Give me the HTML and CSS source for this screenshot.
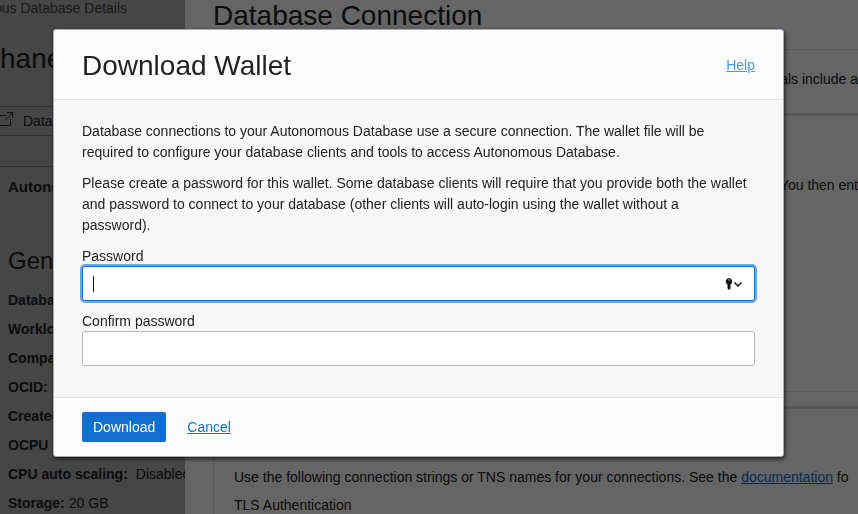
FILE: index.html
```html
<!DOCTYPE html>
<html lang="en">
<head>
<meta charset="utf-8">
<title>Download Wallet</title>
<link rel="stylesheet" href="styles.css">
</head>
<body>
<div class="page">
  <aside class="details">
    <p class="crumb">ous Database Details</p>
    <h2 class="db-name">hane</h2>
    <div class="toolbar">
      <svg width="14" height="16" viewBox="0 0 14 16" fill="none" stroke="currentColor" aria-hidden="true"><path d="M0 4.500H6M10.500 8V14.500H0M5 9.500L12.500 2M7 1.500H12.500V7"/></svg>
      <span>Data</span>
    </div>
    <div class="tab">Autono</div>
    <h3 class="section">General</h3>
    <dl class="facts">
      <div><dt>Database</dt></div>
      <div><dt>Workload</dt></div>
      <div><dt>Compartment</dt></div>
      <div><dt>OCID:</dt><dd>...</dd></div>
      <div><dt>Created</dt></div>
      <div><dt>OCPU</dt></div>
      <div><dt>CPU auto scaling:</dt><dd class="spaced">Disabled</dd></div>
      <div><dt>Storage:</dt><dd>20 GB</dd></div>
    </dl>
  </aside>
  <main class="connection">
    <h1 class="page-title">Database Connection</h1>
    <section class="panel intro"><p class="trail">ials include a</p></section>
    <section class="panel wallet"><p class="trail">You then ent</p></section>
    <section class="panel strings">
      <p>Use the following connection strings or TNS names for your connections. See the <a href="#">documentation</a> fo</p>
      <p>TLS Authentication</p>
    </section>
  </main>
</div>
<div class="overlay">
  <form class="dialog" role="dialog" aria-labelledby="dialog-title">
    <header class="dialog-head">
      <h2 id="dialog-title">Download Wallet</h2>
      <a class="help" href="#">Help</a>
    </header>
    <div class="dialog-body">
      <p>Database connections to your Autonomous Database use a secure connection. The wallet file will be required to configure your database clients and tools to access Autonomous Database.</p>
      <p>Please create a password for this wallet. Some database clients will require that you provide both the wallet and password to connect to your database (other clients will auto-login using the wallet without a<br>password).</p>
      <label for="password">Password</label>
      <div class="field active">
        <span class="caret"></span>
        <input id="password" type="password">
        <svg class="key" width="18" height="14" viewBox="0 0 18 14" aria-hidden="true"><path fill="#111" fill-rule="evenodd" d="M4 1a3.500 3.500 0 0 1 1.500 6.500V11.500L4 13L2.500 11.500V7.500A3.500 3.500 0 0 1 4 1ZM4 2.200a.7.7 0 1 0 0 1.400a.7.7 0 1 0 0-1.400Z"/><path fill="none" stroke="#111" stroke-width="1.500" d="M9.500 5.500L13 9L16.500 5.500"/></svg>
      </div>
      <label for="confirm">Confirm password</label>
      <div class="field"><input id="confirm" type="password"></div>
    </div>
    <footer class="dialog-foot">
      <button type="submit">Download</button>
      <a href="#">Cancel</a>
    </footer>
  </form>
</div>
</body>
</html>
```
FILE: styles.css
```css
* { box-sizing: border-box; }
html, body { height: 100%; }
body {
  margin: 0;
  overflow: hidden;
  font: 14px/21px "Liberation Sans", Arial, sans-serif;
  color: #222;
}
h1, h2, h3, p, dl, dd { margin: 0; font-weight: normal; }

.page {
  display: grid;
  grid-template-columns: 185px 1fr;
  height: 100%;
  overflow: hidden;
  background: #fcfcfc;
}
.details {
  min-width: 0;
  overflow: hidden;
  white-space: nowrap;
  background: #afafaf;
}
.crumb { height: 40px; margin-left: -6px; line-height: 17px; color: #444; }
.db-name { height: 66px; font-size: 28px; line-height: 38px; }
.toolbar {
  display: flex;
  align-items: center;
  gap: 9px;
  height: 30px;
  border: solid #777;
  border-width: 1px 0;
}
.toolbar svg { margin-bottom: 4px; }
.tab {
  margin-top: 30px;
  padding: 9px 8px 10px;
  border-top: 1px solid #777;
  font-size: 15px;
  font-weight: bold;
}
.section { padding: 38px 8px 0; font-size: 24px; line-height: 32px; }
.facts { padding: 9px 0 0 8px; }
.facts div { display: flex; gap: 4px; height: 29px; line-height: 29px; }
.facts dt { font-weight: bold; }
.facts .spaced { padding-left: 4px; }

.connection { min-width: 0; padding-left: 28px; overflow: hidden; white-space: nowrap; }
.page-title { height: 49px; font-size: 28px; line-height: 32px; }
.panel { border: solid #e2e2e2; border-width: 1px 0 0 1px; }
.trail { display: flex; justify-content: flex-end; }
.intro { height: 67px; padding-top: 19px; border-bottom: 3px solid #d9dadc; }
.wallet { height: 276px; padding-top: 59px; border-bottom-width: 1px; border-top: 0; }
.strings { margin-top: 14px; padding: 58px 0 0 20px; border-top: 3px solid #d3d7de; }
.strings p { margin-bottom: 7px; }

a { color: #116fd0; }

.overlay {
  position: fixed;
  inset: 0;
  padding: 29px 74px 0 53px;
  background: rgba(0, 0, 0, .6);
}
.dialog {
  border: 1px solid #a5acb8;
  border-radius: 3px;
  background: #fcfcfc;
  box-shadow: 1px 2px 4px rgba(0, 0, 0, .7);
}
.dialog-head {
  display: flex;
  align-items: center;
  justify-content: space-between;
  height: 70px;
  padding: 2px 28px 0;
  border-bottom: 1px solid #e2e2e2;
}
.dialog-head h2 { font-size: 28px; line-height: 36px; }
.help { color: #4c98e2; }
.dialog-body { padding: 21px 28px 31px; background: #f7f7f7; border-bottom: 1px solid #e2e2e2; }
.dialog-body p { margin-bottom: 10px; }
.dialog-body label { display: block; line-height: 20px; }
.field {
  display: flex;
  align-items: center;
  height: 35px;
  margin-bottom: 10px;
  padding: 0 11px;
  border: 1px solid #b1b7c2;
  border-radius: 3px;
  background: #fff;
}
.field:last-child { margin-bottom: 0; }
.field input { flex: 1; min-width: 0; border: 0; outline: 0; background: none; font: inherit; }
.field.active { padding-left: 10px; border-color: #116fd0; box-shadow: 0 0 0 2px #71a4e0; }
.caret { width: 1px; height: 16px; background: #111; }
.dialog-foot { display: flex; align-items: center; gap: 21px; padding: 14px 28px; }
.dialog-foot button {
  height: 30px;
  padding: 0 11px;
  border: 0;
  border-radius: 2px;
  background: #116fd0;
  color: #fff;
  font: inherit;
}
```
